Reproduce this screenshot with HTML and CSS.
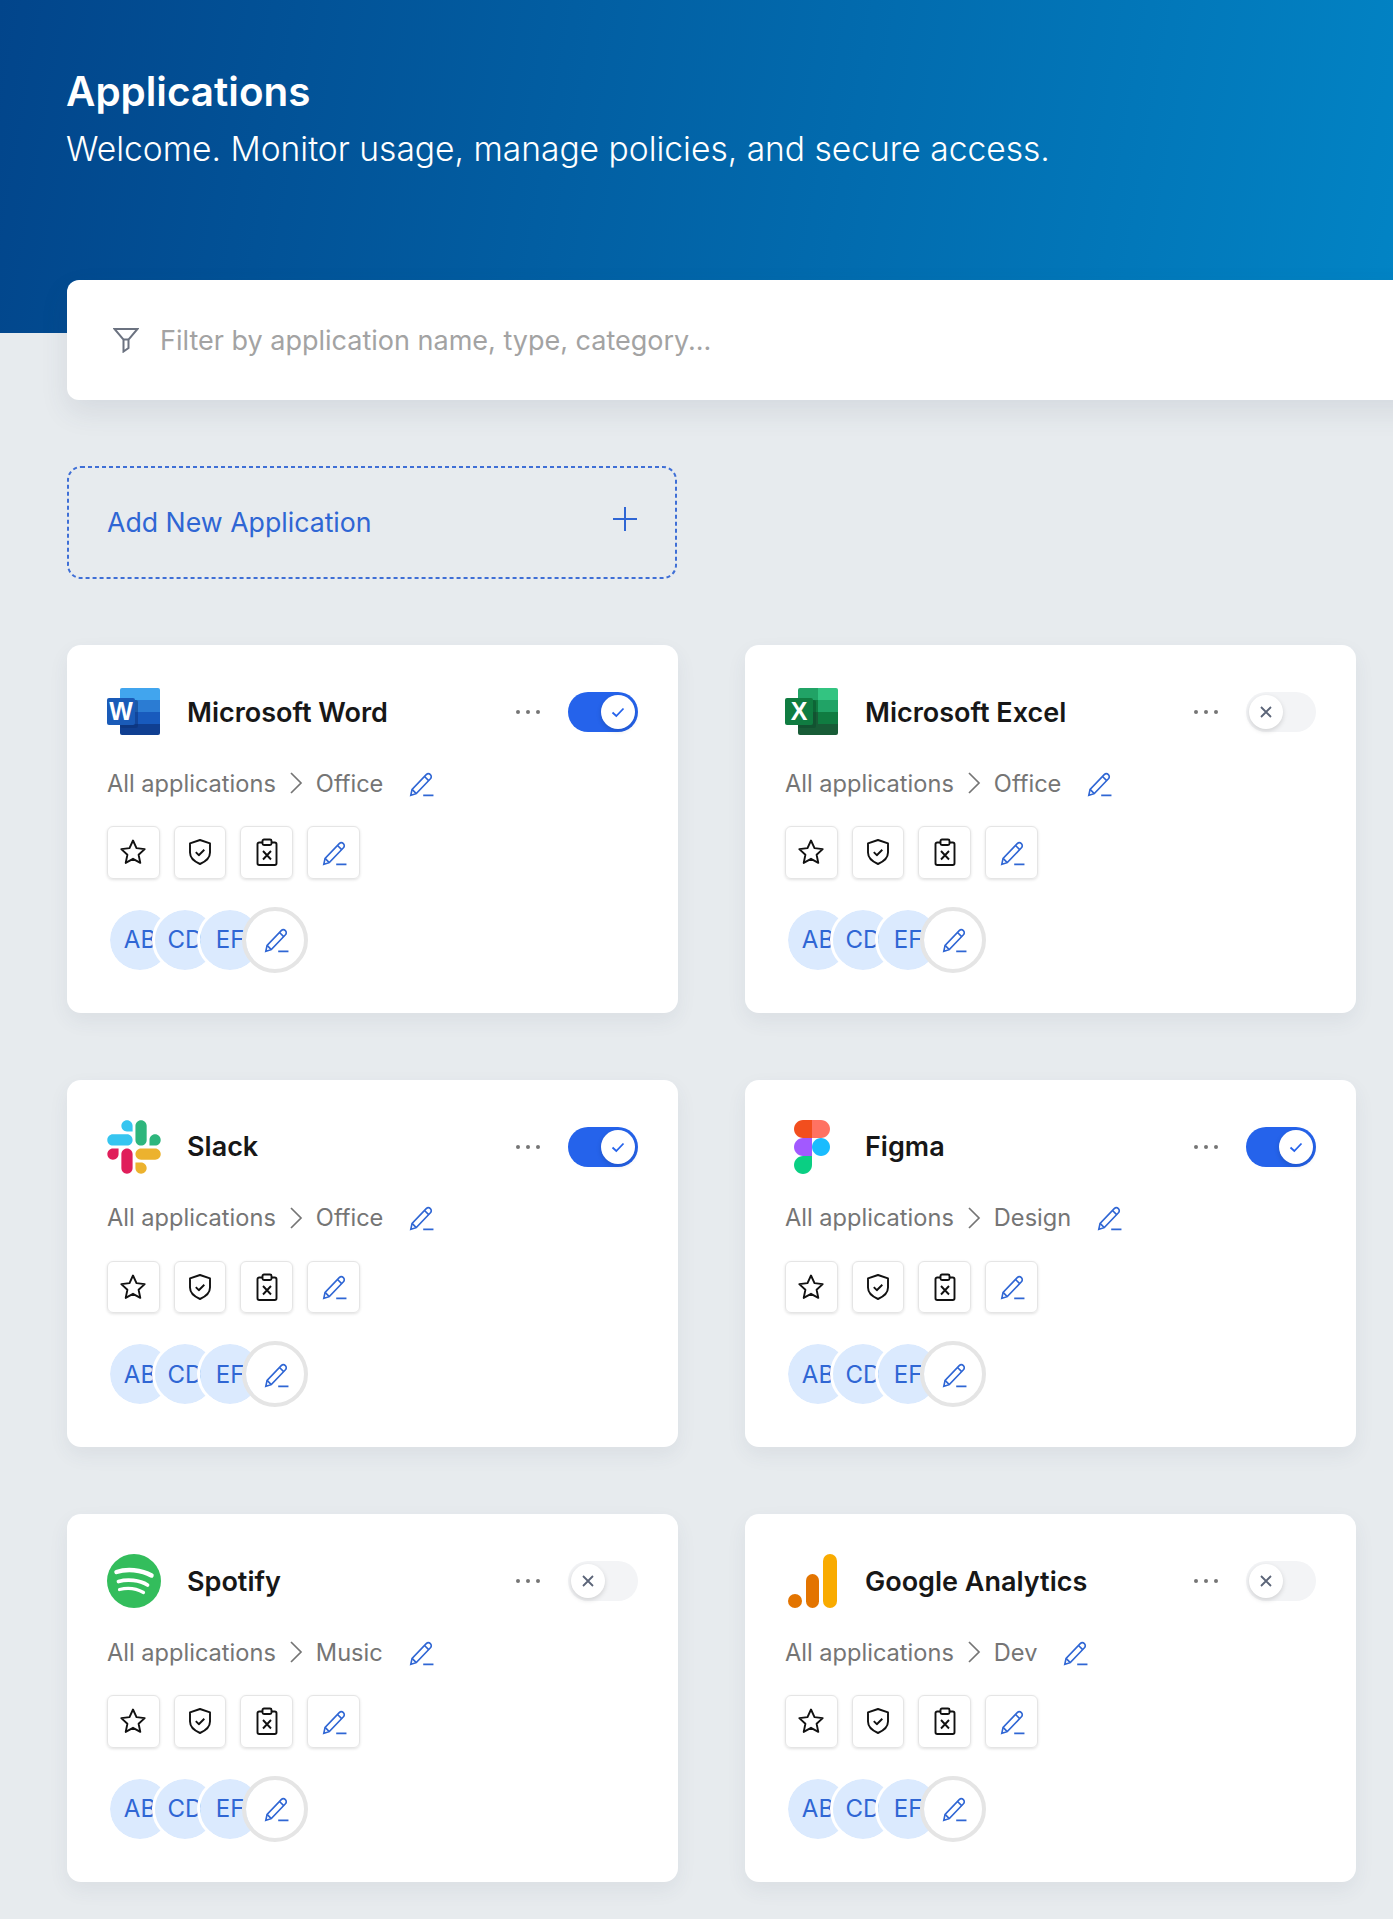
FILE: index.html
```html
<!DOCTYPE html>
<html lang="en">
<head>
    <meta charset="UTF-8">
    <title>Applications</title>
    <link rel="stylesheet" href="styles.css">
</head>
<body>
    <svg class="sprite" xmlns="http://www.w3.org/2000/svg">
        <symbol id="pencil" viewBox="-2 -1 25 25">
            <path d="M1.5 22.5l1.2-5.6L15.8 3.3a2.7 2.7 0 0 1 3.9 3.8L6.6 20.9z"/>
            <path d="M14.2 5l3.9 3.8M2.7 16.9l3.9 4M13 22.5h9.5"/>
        </symbol>
        <symbol id="star" viewBox="0 0 28 28">
            <path d="M14 2.5l3.5 7.6 8.2 1-6.1 5.6 1.7 8.2-7.3-4.1-7.3 4.1 1.7-8.2-6.1-5.6 8.2-1z"/>
        </symbol>
        <symbol id="shield" viewBox="0 0 28 28">
            <path d="M14 2l10 3.4v9.2c0 5.2-4 8.9-10 11.4C8 23.5 4 19.8 4 14.6V5.4z"/>
            <path d="M9.8 14.2l3 3 5.5-5.4"/>
        </symbol>
        <symbol id="clipboard" viewBox="0 0 28 28">
            <path d="M9.5 4.5H6.2a1.7 1.7 0 0 0-1.7 1.7v19.1A1.7 1.7 0 0 0 6.2 27h15.600a1.700 1.700 0 0 0 1.700-1.700V6.200a1.700 1.700 0 0 0-1.700-1.700h-3.300"/>
            <rect x="9.5" y="1.5" width="9" height="5.5" rx="1.5"/>
            <path d="M10 13l8 8.5M18 13l-8 8.5"/>
        </symbol>
        <symbol id="check" viewBox="0 0 16 16">
            <path d="M2.5 8.5l3.8 3.5 7.2-7.5"/>
        </symbol>
        <symbol id="cross" viewBox="0 0 16 16">
            <path d="M3 3l10 10M13 3L3 13"/>
        </symbol>
        <symbol id="chevron" viewBox="0 0 14 24">
            <path d="M2 2l10 10L2 22"/>
        </symbol>
    </svg>

    <header class="banner">
        <h1 class="banner-title">Applications</h1>
        <p class="banner-subtitle">Welcome. Monitor usage, manage policies, and secure access.</p>
    </header>

    <main class="content">
        <div class="filter-bar">
            <svg class="filter-icon" viewBox="0 0 26 26"><path d="M1.5 2h23l-9 10.5v8.5l-5 3.5V12.500z"/><path d="M10.5 12.500h5"/></svg>
            <span class="filter-text">Filter by application name, type, category...</span>
        </div>

        <div class="add-card">
            <svg class="add-border"><rect x="1" y="1" width="608" height="111" rx="13"/></svg>
            <span class="add-text">Add New Application</span>
            <svg class="add-icon" viewBox="0 0 26 26"><path d="M13 1v24M1 13h24"/></svg>
        </div>

        <div class="card-grid">
            <section class="card">
                <div class="card-head">
                    <svg class="logo" viewBox="0 0 54 54">
                        <path fill="#41a5ee" d="M13 15V5a2 2 0 0 1 2-2h36a2 2 0 0 1 2 2v10z"/>
                        <rect fill="#2b7cd3" x="13" y="15" width="40" height="12"/>
                        <rect fill="#185abd" x="13" y="27" width="40" height="12"/>
                        <path fill="#103f91" d="M13 39h40v9a2 2 0 0 1-2 2H15a2 2 0 0 1-2-2z"/>
                        <rect fill="#0b2f70" opacity=".45" x="13" y="15" width="18" height="28" rx="2"/>
                        <rect fill="#1a5bb8" x="0" y="13" width="28" height="27" rx="2"/>
                        <text class="logo-letter" x="14" y="35" text-anchor="middle">W</text>
                    </svg>
                    <h2 class="card-title">Microsoft Word</h2>
                    <span class="dots"><i></i><i></i><i></i></span>
                    <span class="toggle on"><span class="knob"><svg class="knob-icon"><use href="#check"/></svg></span></span>
                </div>
                <div class="crumbs">All applications<svg class="chevron"><use href="#chevron"/></svg>Office<svg class="pencil crumb-pencil"><use href="#pencil"/></svg></div>
                <div class="actions">
                    <span class="action"><svg class="action-icon"><use href="#star"/></svg></span>
                    <span class="action"><svg class="action-icon"><use href="#shield"/></svg></span>
                    <span class="action"><svg class="action-icon"><use href="#clipboard"/></svg></span>
                    <span class="action"><svg class="pencil"><use href="#pencil"/></svg></span>
                </div>
                <div class="people">
                    <span class="person">AB</span><span class="person">CD</span><span class="person">EF</span>
                    <span class="person person-edit"><svg class="pencil"><use href="#pencil"/></svg></span>
                </div>
            </section>

            <section class="card">
                <div class="card-head">
                    <svg class="logo" viewBox="0 0 54 54">
                        <path fill="#21a366" d="M13 15V5a2 2 0 0 1 2-2h18v12z"/>
                        <path fill="#33c481" d="M33 3h18a2 2 0 0 1 2 2v10H33z"/>
                        <rect fill="#107c41" x="13" y="15" width="20" height="12"/>
                        <rect fill="#21a366" x="33" y="15" width="20" height="12"/>
                        <rect fill="#185c37" x="13" y="27" width="20" height="12"/>
                        <rect fill="#107c41" x="33" y="27" width="20" height="12"/>
                        <path fill="#185c37" d="M13 39h40v9a2 2 0 0 1-2 2H15a2 2 0 0 1-2-2z"/>
                        <rect fill="#0c4a2a" opacity=".45" x="13" y="15" width="18" height="28" rx="2"/>
                        <rect fill="#107c41" x="0" y="13" width="28" height="27" rx="2"/>
                        <text class="logo-letter" x="14" y="35" text-anchor="middle">X</text>
                    </svg>
                    <h2 class="card-title">Microsoft Excel</h2>
                    <span class="dots"><i></i><i></i><i></i></span>
                    <span class="toggle"><span class="knob"><svg class="knob-icon"><use href="#cross"/></svg></span></span>
                </div>
                <div class="crumbs">All applications<svg class="chevron"><use href="#chevron"/></svg>Office<svg class="pencil crumb-pencil"><use href="#pencil"/></svg></div>
                <div class="actions">
                    <span class="action"><svg class="action-icon"><use href="#star"/></svg></span>
                    <span class="action"><svg class="action-icon"><use href="#shield"/></svg></span>
                    <span class="action"><svg class="action-icon"><use href="#clipboard"/></svg></span>
                    <span class="action"><svg class="pencil"><use href="#pencil"/></svg></span>
                </div>
                <div class="people">
                    <span class="person">AB</span><span class="person">CD</span><span class="person">EF</span>
                    <span class="person person-edit"><svg class="pencil"><use href="#pencil"/></svg></span>
                </div>
            </section>

            <section class="card">
                <div class="card-head">
                    <svg class="logo" viewBox="0 0 127 127">
                        <path fill="#e01e5a" d="M27.2 80c0 7.3-5.9 13.2-13.2 13.2C6.7 93.2.8 87.3.8 80c0-7.3 5.9-13.2 13.2-13.2h13.2V80zm6.6 0c0-7.3 5.9-13.2 13.2-13.2 7.3 0 13.2 5.9 13.2 13.2v33c0 7.3-5.9 13.2-13.2 13.2-7.3 0-13.2-5.9-13.2-13.2V80z"/>
                        <path fill="#36c5f0" d="M47 27c-7.3 0-13.2-5.9-13.2-13.2C33.8 6.5 39.7.6 47 .6c7.3 0 13.2 5.9 13.2 13.2V27H47zm0 6.7c7.3 0 13.2 5.9 13.2 13.2 0 7.3-5.9 13.2-13.2 13.2H13.9C6.6 60.1.7 54.2.7 46.9c0-7.3 5.9-13.2 13.2-13.2H47z"/>
                        <path fill="#2eb67d" d="M99.9 46.9c0-7.3 5.9-13.2 13.2-13.2 7.3 0 13.2 5.9 13.2 13.2 0 7.3-5.9 13.2-13.2 13.2H99.9V46.9zm-6.6 0c0 7.3-5.9 13.2-13.2 13.2-7.3 0-13.2-5.9-13.2-13.2V13.8C66.9 6.5 72.8.6 80.1.6c7.3 0 13.2 5.9 13.2 13.2v33.1z"/>
                        <path fill="#ecb22e" d="M80.1 99.8c7.3 0 13.2 5.9 13.2 13.2 0 7.3-5.9 13.2-13.2 13.2-7.3 0-13.2-5.9-13.2-13.2V99.8h13.2zm0-6.6c-7.3 0-13.2-5.9-13.2-13.2 0-7.3 5.9-13.2 13.2-13.2h33.1c7.3 0 13.2 5.9 13.2 13.2 0 7.3-5.9 13.2-13.2 13.2H80.1z"/>
                    </svg>
                    <h2 class="card-title">Slack</h2>
                    <span class="dots"><i></i><i></i><i></i></span>
                    <span class="toggle on"><span class="knob"><svg class="knob-icon"><use href="#check"/></svg></span></span>
                </div>
                <div class="crumbs">All applications<svg class="chevron"><use href="#chevron"/></svg>Office<svg class="pencil crumb-pencil"><use href="#pencil"/></svg></div>
                <div class="actions">
                    <span class="action"><svg class="action-icon"><use href="#star"/></svg></span>
                    <span class="action"><svg class="action-icon"><use href="#shield"/></svg></span>
                    <span class="action"><svg class="action-icon"><use href="#clipboard"/></svg></span>
                    <span class="action"><svg class="pencil"><use href="#pencil"/></svg></span>
                </div>
                <div class="people">
                    <span class="person">AB</span><span class="person">CD</span><span class="person">EF</span>
                    <span class="person person-edit"><svg class="pencil"><use href="#pencil"/></svg></span>
                </div>
            </section>

            <section class="card">
                <div class="card-head">
                    <svg class="logo" viewBox="-50 0 300 300">
                        <path fill="#0acf83" d="M50 300c27.6 0 50-22.4 50-50v-50H50c-27.6 0-50 22.4-50 50s22.4 50 50 50z"/>
                        <path fill="#a259ff" d="M0 150c0-27.6 22.4-50 50-50h50v100H50c-27.6 0-50-22.4-50-50z"/>
                        <path fill="#f24e1e" d="M0 50C0 22.4 22.4 0 50 0h50v100H50C22.4 100 0 77.6 0 50z"/>
                        <path fill="#ff7262" d="M100 0h50c27.6 0 50 22.4 50 50s-22.4 50-50 50h-50V0z"/>
                        <path fill="#1abcfe" d="M200 150c0 27.6-22.4 50-50 50s-50-22.4-50-50 22.4-50 50-50 50 22.4 50 50z"/>
                    </svg>
                    <h2 class="card-title">Figma</h2>
                    <span class="dots"><i></i><i></i><i></i></span>
                    <span class="toggle on"><span class="knob"><svg class="knob-icon"><use href="#check"/></svg></span></span>
                </div>
                <div class="crumbs">All applications<svg class="chevron"><use href="#chevron"/></svg>Design<svg class="pencil crumb-pencil"><use href="#pencil"/></svg></div>
                <div class="actions">
                    <span class="action"><svg class="action-icon"><use href="#star"/></svg></span>
                    <span class="action"><svg class="action-icon"><use href="#shield"/></svg></span>
                    <span class="action"><svg class="action-icon"><use href="#clipboard"/></svg></span>
                    <span class="action"><svg class="pencil"><use href="#pencil"/></svg></span>
                </div>
                <div class="people">
                    <span class="person">AB</span><span class="person">CD</span><span class="person">EF</span>
                    <span class="person person-edit"><svg class="pencil"><use href="#pencil"/></svg></span>
                </div>
            </section>

            <section class="card">
                <div class="card-head">
                    <svg class="logo" viewBox="0 0 54 54">
                        <circle fill="#33bd5c" cx="27" cy="27" r="27"/>
                        <path class="spotify-line wide" d="M9.5 18c10-3.5 25-2.5 35 3.5"/>
                        <path class="spotify-line mid" d="M11.5 27.5c9-2.5 21-1.5 29 3.5"/>
                        <path class="spotify-line thin" d="M12.5 35.5c8-2 17-1 24 3"/>
                    </svg>
                    <h2 class="card-title">Spotify</h2>
                    <span class="dots"><i></i><i></i><i></i></span>
                    <span class="toggle"><span class="knob"><svg class="knob-icon"><use href="#cross"/></svg></span></span>
                </div>
                <div class="crumbs">All applications<svg class="chevron"><use href="#chevron"/></svg>Music<svg class="pencil crumb-pencil"><use href="#pencil"/></svg></div>
                <div class="actions">
                    <span class="action"><svg class="action-icon"><use href="#star"/></svg></span>
                    <span class="action"><svg class="action-icon"><use href="#shield"/></svg></span>
                    <span class="action"><svg class="action-icon"><use href="#clipboard"/></svg></span>
                    <span class="action"><svg class="pencil"><use href="#pencil"/></svg></span>
                </div>
                <div class="people">
                    <span class="person">AB</span><span class="person">CD</span><span class="person">EF</span>
                    <span class="person person-edit"><svg class="pencil"><use href="#pencil"/></svg></span>
                </div>
            </section>

            <section class="card">
                <div class="card-head">
                    <svg class="logo" viewBox="0 0 54 54">
                        <circle fill="#e37400" cx="10" cy="47" r="7"/>
                        <rect fill="#e37400" x="21" y="20" width="13" height="34" rx="6.5"/>
                        <rect fill="#f9ab00" x="38" y="0" width="14" height="54" rx="7"/>
                    </svg>
                    <h2 class="card-title">Google Analytics</h2>
                    <span class="dots"><i></i><i></i><i></i></span>
                    <span class="toggle"><span class="knob"><svg class="knob-icon"><use href="#cross"/></svg></span></span>
                </div>
                <div class="crumbs">All applications<svg class="chevron"><use href="#chevron"/></svg>Dev<svg class="pencil crumb-pencil"><use href="#pencil"/></svg></div>
                <div class="actions">
                    <span class="action"><svg class="action-icon"><use href="#star"/></svg></span>
                    <span class="action"><svg class="action-icon"><use href="#shield"/></svg></span>
                    <span class="action"><svg class="action-icon"><use href="#clipboard"/></svg></span>
                    <span class="action"><svg class="pencil"><use href="#pencil"/></svg></span>
                </div>
                <div class="people">
                    <span class="person">AB</span><span class="person">CD</span><span class="person">EF</span>
                    <span class="person person-edit"><svg class="pencil"><use href="#pencil"/></svg></span>
                </div>
            </section>
        </div>
    </main>
</body>
</html>
```

FILE: styles.css
```css
/* Base */
:root {
    --blue: #2563eb;
    --pencil-blue: #2f66d4;
    --blue-soft: #dbeafe;
    --page-bg: #e7ebee;
    --gray-text: #757575;
}

* {
    margin: 0;
    padding: 0;
    box-sizing: border-box;
}

html,
body {
    height: 1919px;
    overflow: hidden;
}

body {
    font-family: 'Inter', 'Liberation Sans', sans-serif;
    background-color: var(--page-bg);
    color: #171717;
}

.sprite {
    display: none;
}

/* Banner */
.banner {
    height: 333px;
    padding: 66px 66px 0;
    color: white;
    background: linear-gradient(100deg, #02458b 0%, #0284c5 100%);
}

.banner-title {
    font-size: 40.4px;
    line-height: 52px;
    font-weight: 600;
}

.banner-subtitle {
    font-size: 33.6px;
    line-height: 48px;
    margin-top: 7px;
    font-weight: 300;
}

/* Content */
.content {
    padding: 0 0 0 67px;
}

.filter-bar {
    width: 1400px;
    height: 120px;
    margin-top: -53px;
    position: relative;
    display: flex;
    align-items: center;
    padding-left: 46px;
    background-color: white;
    border-radius: 12px;
    box-shadow: 0 12px 28px rgba(60, 70, 100, 0.1);
}

.filter-icon {
    width: 26px;
    height: 26px;
    fill: none;
    stroke: #6b7280;
    stroke-width: 2;
}

.filter-text {
    margin-left: 21px;
    font-size: 27px;
    color: #a3a3a3;
}

.add-card {
    width: 610px;
    height: 113px;
    margin-top: 66px;
    position: relative;
    display: flex;
    align-items: center;
    justify-content: space-between;
    padding: 0 39px 8px 40px;
}

/* svg border, css dashes come out too long */
.add-border {
    position: absolute;
    inset: 0;
    width: 100%;
    height: 100%;
    fill: none;
    stroke: #3f6fd6;
    stroke-width: 2;
    stroke-dasharray: 4 3;
}

.add-text {
    font-size: 26.7px;
    padding-top: 7px;
    color: var(--pencil-blue);
}

.add-icon {
    width: 26px;
    height: 26px;
    fill: none;
    stroke: var(--pencil-blue);
    stroke-width: 2;
}

/* Cards */
.card-grid {
    display: grid;
    grid-template-columns: 611px 611px;
    grid-auto-rows: 367.5px;
    gap: 67px;
    margin-top: 66px;
}

.card {
    padding: 40px;
    background-color: white;
    border-radius: 14px;
    box-shadow: 0 8px 20px rgba(60, 70, 100, 0.07);
}

.card-head {
    display: flex;
    align-items: center;
    height: 54px;
}

.logo {
    width: 54px;
    height: 54px;
    flex-shrink: 0;
}

.logo-letter {
    font-family: 'Liberation Sans', sans-serif;
    font-size: 25px;
    font-weight: 700;
    fill: white;
}

.spotify-line {
    fill: none;
    stroke: white;
    stroke-linecap: round;
}

.wide { stroke-width: 4.5; }
.mid { stroke-width: 3.8; }
.thin { stroke-width: 3.2; }

.card-title {
    margin-left: 26px;
    flex: 1;
    font-size: 27px;
    font-weight: 600;
}

.dots {
    display: flex;
    gap: 6px;
    margin-right: 28px;
}

.dots i {
    width: 4px;
    height: 4px;
    border-radius: 50%;
    background-color: var(--gray-text);
}

.toggle {
    width: 70px;
    height: 40px;
    padding: 3px;
    display: flex;
    border-radius: 20px;
    background-color: #f3f4f6;
}

.toggle.on {
    justify-content: flex-end;
    background-color: var(--blue);
}

.knob {
    width: 34px;
    height: 34px;
    display: flex;
    align-items: center;
    justify-content: center;
    border-radius: 50%;
    background-color: white;
    box-shadow: 0 2px 5px rgba(0, 0, 0, 0.15);
}

.knob-icon {
    width: 16px;
    height: 16px;
    fill: none;
    stroke: #5b6478;
    stroke-width: 1.8;
}

.toggle.on .knob-icon {
    stroke: var(--blue);
}

/* Breadcrumb */
.crumbs {
    display: flex;
    align-items: center;
    height: 34px;
    margin-top: 27px;
    font-size: 23.6px;
    color: var(--gray-text);
}

.chevron {
    width: 14px;
    height: 24px;
    margin: 0 13px;
    fill: none;
    stroke: var(--gray-text);
    stroke-width: 1.7;
}

.pencil {
    width: 27px;
    height: 27px;
    fill: none;
    stroke: var(--pencil-blue);
    stroke-width: 1.5;
}

.crumb-pencil {
    margin-left: 24px;
}

/* Action buttons */
.actions {
    display: flex;
    gap: 14.2px;
    margin-top: 26px;
}

.action {
    width: 52.5px;
    height: 52.5px;
    display: flex;
    align-items: center;
    justify-content: center;
    border: 1px solid #e5e5e5;
    border-radius: 6px;
    box-shadow: 0 1px 3px rgba(0, 0, 0, 0.12);
}

.action-icon {
    width: 28px;
    height: 28px;
    fill: none;
    stroke: #111;
    stroke-width: 1.9;
    stroke-linejoin: round;
}

/* People */
.people {
    display: flex;
    margin-top: 28px;
}

.person {
    width: 66px;
    height: 66px;
    display: flex;
    align-items: center;
    justify-content: center;
    flex-shrink: 0;
    margin-right: -21px;
    font-size: 24px;
    color: var(--pencil-blue);
    background-color: var(--blue-soft);
    background-clip: padding-box;
    border: 3px solid white;
    border-radius: 50%;
    position: relative;
    overflow: hidden;
}

.person-edit {
    background-color: white;
    border: 4px solid #e5e5e5;
}
```
